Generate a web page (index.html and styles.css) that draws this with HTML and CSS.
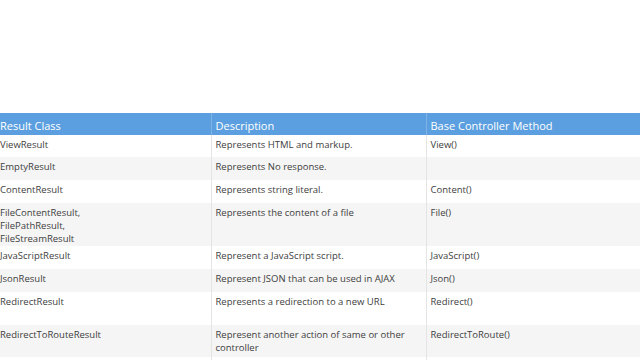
FILE: index.html
```html
<!DOCTYPE html>
<html lang="en">
<head>
  <meta charset="UTF-8">
  <title>Action Results</title>
  <link rel="stylesheet" href="styles.css">
</head>
<body>

  <table class="results">
    <thead>
      <tr>
        <th>Result Class</th>
        <th>Description</th>
        <th>Base Controller Method</th>
      </tr>
    </thead>
    <tbody>
      <tr class="first">
        <td>ViewResult</td>
        <td>Represents HTML and markup.</td>
        <td>View()</td>
      </tr>
      <tr>
        <td>EmptyResult</td>
        <td>Represents No response.</td>
        <td></td>
      </tr>
      <tr>
        <td>ContentResult</td>
        <td>Represents string literal.</td>
        <td>Content()</td>
      </tr>
      <tr>
        <td>FileContentResult,<br>FilePathResult,<br>FileStreamResult</td>
        <td>Represents the content of a file</td>
        <td>File()</td>
      </tr>
      <tr>
        <td>JavaScriptResult</td>
        <td>Represent a JavaScript script.</td>
        <td>JavaScript()</td>
      </tr>
      <tr>
        <td>JsonResult</td>
        <td>Represent JSON that can be used in AJAX</td>
        <td>Json()</td>
      </tr>
      <tr class="tall">
        <td>RedirectResult</td>
        <td>Represents a redirection to a new URL</td>
        <td>Redirect()</td>
      </tr>
      <tr class="tall">
        <td>RedirectToRouteResult</td>
        <td>Represent another action of same or other controller</td>
        <td>RedirectToRoute()</td>
      </tr>
      <tr>
        <td></td>
        <td></td>
        <td></td>
      </tr>
    </tbody>
  </table>

</body>
</html>
```

FILE: styles.css
```css
body {
  font-family: 'Open Sans', sans-serif;
  background-color: #ffffff;
  margin: 0;
  padding: 113px 0 0;
  overflow: hidden;
}

.results {
  border-collapse: collapse;
  table-layout: fixed;
  width: 645px;
  margin-left: -4px;
  font-size: 9.5px;
  line-height: 13px;
  color: #404040;
}

.results th {
  box-sizing: border-box;
  background-color: #5b9fe0;
  color: #ffffff;
  font-weight: 400;
  font-size: 11px;
  text-align: left;
  height: 22px;
  padding: 2px 4px 0;
  border-left: 1px solid #7fb3e6;
}

.results td {
  vertical-align: top;
  padding: 3px 4px 1px;
  border-left: 1px solid #e4e4e4;
}

.results th:first-child,
.results td:first-child {
  border-left: none;
}

.results tbody tr {
  height: 23px;
}

.results tbody tr.first {
  height: 22px;
}

.results tbody tr:nth-child(even) {
  background-color: #f5f5f5;
}

.results tbody tr.tall {
  height: 32.5px;
}
```
